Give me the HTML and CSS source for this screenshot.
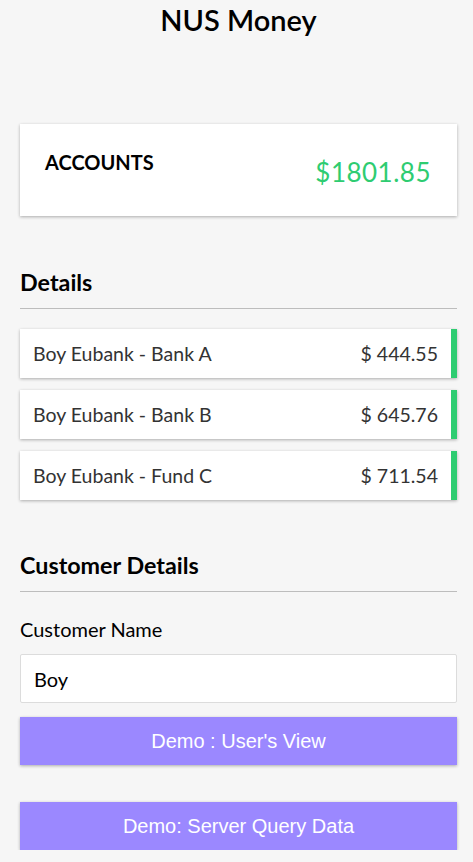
FILE: index.html
```html
<!DOCTYPE html>
<html>
<head>
<meta charset="utf-8">
<link rel="stylesheet" href="styles.css">
</head>
<body>
<div class="page">
  <h1 class="title">NUS Money</h1>
  <div class="summary">
    <div class="summary-label">ACCOUNTS</div>
    <div class="summary-amount">$1801.85</div>
  </div>
  <h2 class="section-title first">Details</h2>
  <div class="rows">
    <div class="row"><span class="row-name">Boy Eubank - Bank A</span><span class="row-amount">$ 444.55</span></div>
    <div class="row"><span class="row-name">Boy Eubank - Bank B</span><span class="row-amount">$ 645.76</span></div>
    <div class="row"><span class="row-name">Boy Eubank - Fund C</span><span class="row-amount">$ 711.54</span></div>
  </div>
  <h2 class="section-title second">Customer Details</h2>
  <label class="field-label">Customer Name</label>
  <input class="field-input" type="text" value="Boy">
  <button class="btn">Demo : User's View</button>
  <button class="btn btn-second">Demo: Server Query Data</button>
</div>
</body>
</html>
```
FILE: styles.css
```css
html, body {
  margin: 0;
  padding: 0;
  background: #f6f6f6;
}
body {
  font-family: Lato, "Open Sans", sans-serif;
  color: #000;
}
.page {
  padding: 0 16px 0 20px;
  display: flex;
  flex-direction: column;
}
.title {
  margin: 3px 0 0;
  font-size: 29px;
  font-weight: 600;
  text-align: center;
  line-height: 34px;
}
.summary {
  margin-top: 87px;
  background: #fff;
  height: 92px;
  box-shadow: 0 1px 3px rgba(0,0,0,0.3);
  display: flex;
  justify-content: space-between;
  box-sizing: border-box;
  padding: 0 26px 0 25px;
}
.summary-label {
  font-size: 20px;
  font-weight: 700;
  margin-top: 26px;
  line-height: 24px;
}
.summary-amount {
  font-size: 26px;
  font-weight: 400;
  color: #2ecc71;
  margin-top: 32px;
  line-height: 32px;
  letter-spacing: 0.5px;
}
.section-title {
  margin: 0;
  font-size: 23.3px;
  font-weight: 700;
  line-height: 28px;
  padding-bottom: 12px;
  border-bottom: 1px solid #bdbdbd;
}
.section-title.first { margin-top: 52px; }
.section-title.second { margin-top: 51px; }
.rows {
  margin-top: 20px;
  display: flex;
  flex-direction: column;
  gap: 12px;
}
.row {
  background: #fff;
  height: 49px;
  box-sizing: border-box;
  border-right: 6px solid #2ecc71;
  box-shadow: 0 1px 3px rgba(0,0,0,0.3);
  display: flex;
  align-items: center;
  justify-content: space-between;
  padding: 0 13px 0 13px;
  font-size: 19.5px;
  color: #333;
}
.field-label {
  margin-top: 26px;
  font-size: 20px;
  line-height: 22px;
}
.field-input {
  margin-top: 14px;
  height: 49px;
  box-sizing: border-box;
  border: 1px solid #dcdcdc;
  border-radius: 2px;
  background: #fff;
  padding: 0 13px;
  font-family: Lato, sans-serif;
  font-size: 20px;
  color: #000;
  outline: none;
}
.btn {
  margin-top: 14px;
  height: 48px;
  border: 0;
  background: #9b88ff;
  color: #fff;
  font-family: "Liberation Sans", Arial, sans-serif;
  font-size: 20px;
  box-shadow: 0 1px 3px rgba(0,0,0,0.3);
  cursor: pointer;
}
.btn-second { margin-top: 37px; }
```
